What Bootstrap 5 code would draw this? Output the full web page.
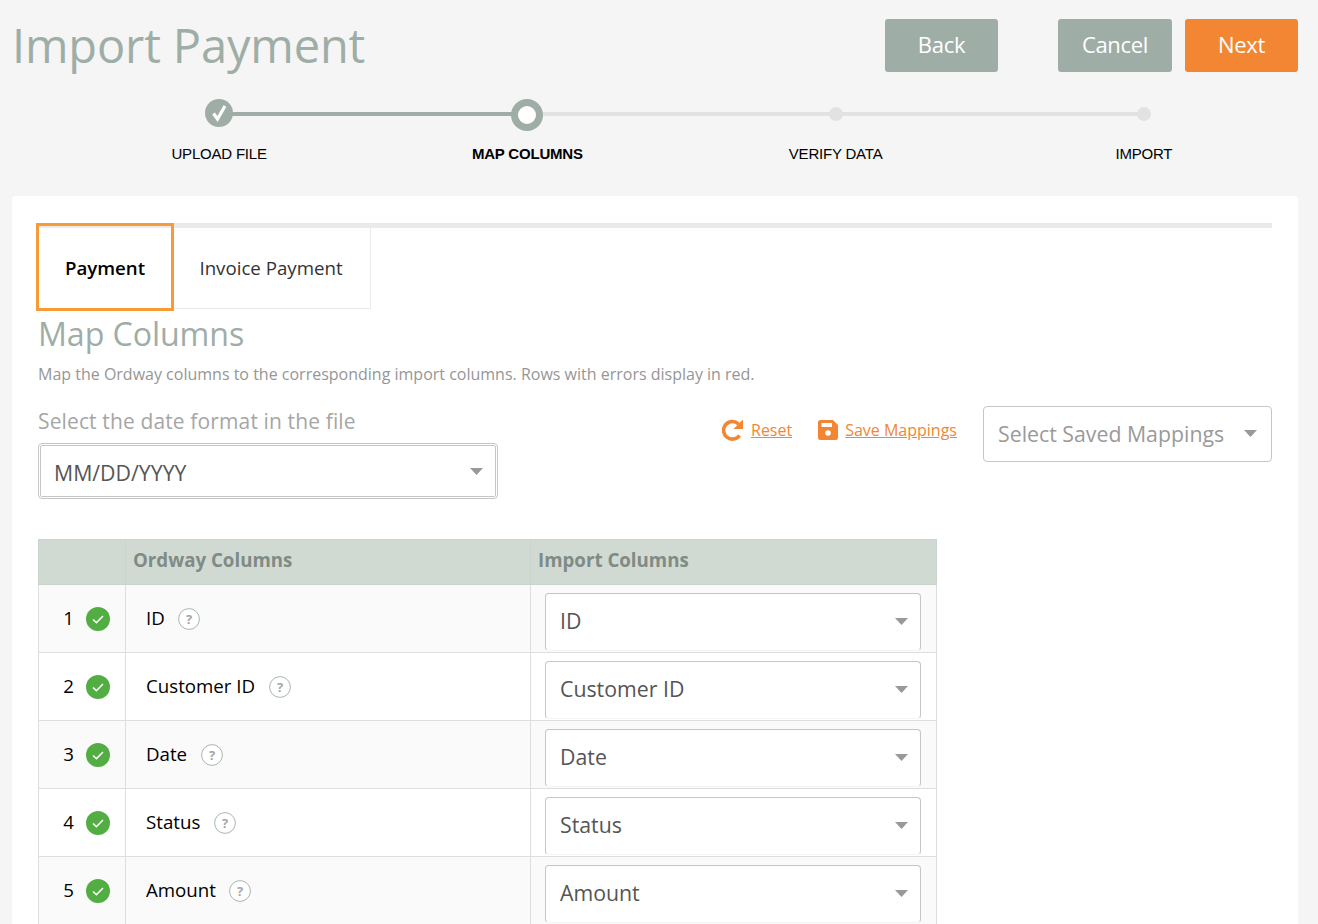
<!DOCTYPE html>
<html lang="en">
<head>
<meta charset="utf-8">
<title>Import Payment</title>
<link href="https://cdn.jsdelivr.net/npm/bootstrap@5.3.0/dist/css/bootstrap.min.css" rel="stylesheet">
<style>
html,body{height:100%;overflow:hidden}
body{background:#f5f5f5;font-family:"Open Sans",sans-serif;color:#000}
.page-wrap{padding:19px 20px 0 12px}
.top-bar{height:53px}
.page-title{font-size:47px;line-height:53px;color:#9fada7;letter-spacing:-.15px;margin:0;font-weight:400}
.act-btn{width:113px;height:53px;font-size:22px;line-height:1;color:#fff;border:0;border-radius:3px;letter-spacing:-.3px;padding:0 0 4px}
.act-wide{width:114px}
.act-grey{background:#9fada7}
.act-orange{background:#f28632}
.act-btn:hover{color:#fff}
.act-grey:hover{background:#9fada7}
.act-orange:hover{background:#f28632}
.gap-back{margin-right:60px}
.gap-next{margin-left:13px}
.stepper{margin:26px 0 0 53px;height:98px}
.step-item{width:25%;position:relative;text-align:center;padding-top:46px;font-family:"Liberation Sans",sans-serif;font-size:15px;line-height:20px;letter-spacing:-.2px}
.step-line{position:absolute;top:14px;left:50%;width:100%;height:4px;background:#e2e2e2}
.step-line.done{background:#9fada7}
.step-dot{position:absolute;top:16px;left:50%;transform:translate(-50%,-50%);border-radius:50%}
.dot-done{width:28px;height:28px;background:#9fada7;top:15px}
.dot-now{width:32px;height:32px;background:#fff;border:7.5px solid #9fada7;top:17px}
.dot-todo{width:14px;height:14px;background:#e2e2e2}
.main-panel{background:#fff;border-radius:4px;padding:27px 26px 0;height:800px}
.tab-row{border-top:5px solid #eaeaea;height:86px;margin-bottom:0;position:relative}
.tab-one,.tab-two{display:flex;align-items:center;justify-content:center;font-size:18.7px}
.tab-one{width:138px;height:88px;margin:-5px 0 0 -2px;border:3px solid #f79a38;font-weight:600;position:relative;padding-top:3px}
.tab-two{width:197px;height:81px;border:1px solid #eaeaea;border-top:0;border-left:0;color:#333;padding-right:2px}
.sec-title{font-size:32.2px;line-height:44px;color:#9fada7;margin:3px 0 0;font-weight:400;letter-spacing:-.1px}
.sec-desc{font-size:16px;line-height:20px;color:#969696;margin:8px 0 0}
.filter-row{margin-top:23px;height:132px}
.date-box{width:460px}
.date-label{font-size:21px;line-height:28px;color:#a6a6a6;margin:0 0 8px;letter-spacing:.13px}
.pick{border:1px solid #c6c6c6;border-radius:4px;color:#555;font-size:21.3px;background-color:#fff;box-shadow:none;padding:0 36px 2px 14px;background-position:right 14px top 24px;background-size:13px 7px;background-image:url("data:image/svg+xml,%3csvg xmlns='http://www.w3.org/2000/svg' viewBox='0 0 13 7'%3e%3cpath fill='%23999' d='M0 0h13L6.500 7z'/%3e%3c/svg%3e")}
.pick:focus{border-color:#c6c6c6;box-shadow:none}
.pick-date{height:56px;outline:1px solid #c6c6c6;outline-offset:-3px;padding:4px 36px 0 15px}
.pick-saved{width:289px;height:56px;color:#9a9a9a;margin-left:26px;padding-bottom:0;background-position:right 14px top 23px}
.right-tools{margin-top:-1px}
.link-tools{font-size:16px;margin-top:12px}
.tool-link{color:#f28632;text-decoration:underline;display:inline-flex;align-items:center;gap:7px}
.tool-link:hover{color:#f28632}
.tool-gap{margin-right:26px}
.map-table{width:898px;table-layout:fixed;margin:0;border-collapse:collapse;--bs-table-bg:transparent}
.map-table th{background:#d0dad3;color:#808b85;font-size:18.7px;font-weight:700;height:45px;padding:0 0 3px 7px;border:1px solid #c9d4cd;vertical-align:middle}
.map-table td{height:68px;padding:0;border:1px solid #dedede;vertical-align:middle;font-size:18.7px;color:#000;box-shadow:none}
.map-table tr:nth-child(odd) td{background:#fafafa}
.map-table tr:nth-child(even) td{background:#fff}
.cell-num{display:flex;align-items:center;justify-content:flex-end;padding-right:15px;gap:12px}
.cell-name{padding-left:20px;display:flex;align-items:center;gap:13.500px}
.cell-pick{padding:0 15px 0 14px}
.cell-pick .pick{height:58px;border-bottom-color:#f4f4f4;margin-top:7px;padding-left:14px;background-position:right 12px top 24px}
.tick{width:24px;height:24px;display:block;flex:none;margin-top:2px}
.help{width:22px;height:22px;display:block;flex:none;margin-top:2px}
</style>
</head>
<body>
<div class="page-wrap">
  <div class="d-flex align-items-center top-bar">
    <h1 class="page-title me-auto">Import Payment</h1>
    <button type="button" class="btn act-btn act-grey gap-back">Back</button>
    <button type="button" class="btn act-btn act-wide act-grey">Cancel</button>
    <button type="button" class="btn act-btn act-orange gap-next">Next</button>
  </div>
  <div class="d-flex stepper">
    <div class="step-item"><span class="step-line done"></span><span class="step-dot dot-done d-flex align-items-center justify-content-center"><svg width="15" height="18" viewBox="0 0 15 18"><path d="M1.500 9.500L5.500 15L13 2" fill="none" stroke="#fff" stroke-width="3.200"/></svg></span>UPLOAD FILE</div>
    <div class="step-item fw-bold"><span class="step-line"></span><span class="step-dot dot-now"></span>MAP COLUMNS</div>
    <div class="step-item"><span class="step-line"></span><span class="step-dot dot-todo"></span>VERIFY DATA</div>
    <div class="step-item"><span class="step-dot dot-todo"></span>IMPORT</div>
  </div>
  <div class="main-panel">
    <div class="d-flex tab-row">
      <div class="tab-one">Payment</div>
      <div class="tab-two">Invoice Payment</div>
    </div>
    <h2 class="sec-title">Map Columns</h2>
    <p class="sec-desc">Map the Ordway columns to the corresponding import columns. Rows with errors display in red.</p>
    <div class="d-flex filter-row">
      <div class="date-box">
        <p class="date-label">Select the date format in the file</p>
        <select class="form-select pick pick-date"><option>MM/DD/YYYY</option></select>
      </div>
      <div class="d-flex align-items-start ms-auto right-tools">
        <div class="d-flex align-items-center link-tools">
          <a class="tool-link tool-gap" href="#"><svg width="22" height="24" viewBox="0 0 22 24"><path d="M17.500 17.500A8.800 8.800 0 1 1 16.500 6" fill="none" stroke="#f28632" stroke-width="3.600"/><path d="M21 1.500v9.500h-9.500z" fill="#f28632"/></svg>Reset</a>
          <a class="tool-link" href="#"><svg width="20" height="20" viewBox="0 0 20 20"><path d="M2.500 0H15l5 5v12.500a2.500 2.500 0 0 1-2.500 2.500h-15A2.500 2.500 0 0 1 0 17.500v-15A2.500 2.500 0 0 1 2.500 0z" fill="#f28632"/><rect x="3.500" y="3" width="10.500" height="4" fill="#fff"/><circle cx="10" cy="13" r="2.800" fill="#fff"/></svg>Save Mappings</a>
        </div>
        <select class="form-select pick pick-saved"><option>Select Saved Mappings</option></select>
      </div>
    </div>
    <table class="table map-table">
      <colgroup><col style="width:87px"><col style="width:405px"><col style="width:406px"></colgroup>
      <thead><tr><th></th><th>Ordway Columns</th><th>Import Columns</th></tr></thead>
      <tbody id="rows"></tbody>
    </table>
  </div>
</div>
<script src="https://cdn.jsdelivr.net/npm/bootstrap@5.3.0/dist/js/bootstrap.bundle.min.js"></script>
<script>
var names=["ID","Customer ID","Date","Status","Amount"];
document.getElementById("rows").innerHTML=names.map(function(n,i){
return '<tr><td><div class="cell-num"><span>'+(i+1)+'</span><svg class="tick" viewBox="0 0 24 24"><circle cx="12" cy="12" r="12" fill="#52ae43"/><path d="M7 12.500l3.400 3.200L17 9" fill="none" stroke="#fff" stroke-width="1.600"/></svg></div></td>'+
'<td><div class="cell-name"><span>'+n+'</span><svg class="help" viewBox="0 0 22 22"><circle cx="11" cy="11" r="10.400" fill="#fff" stroke="#a9b6b0"/><text x="11" y="15.500" text-anchor="middle" font-size="13" font-weight="700" font-family="Open Sans" fill="#a6a6a6">?</text></svg></div></td>'+
'<td><div class="cell-pick"><select class="form-select pick"><option>'+n+'</option></select></div></td></tr>';
}).join("");
</script>
</body>
</html>
